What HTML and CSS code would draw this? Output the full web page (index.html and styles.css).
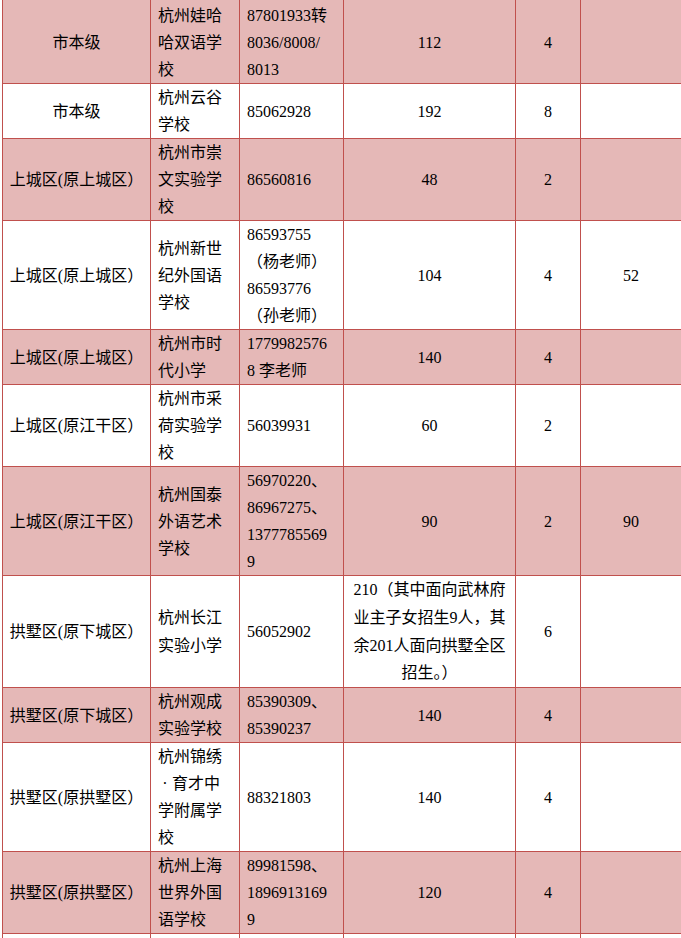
FILE: index.html
```html
<!DOCTYPE html>
<html lang="zh-CN">
<head>
<meta charset="utf-8">
<title>招生表</title>
<link rel="stylesheet" href="styles.css">
</head>
<body>
<table class="grid">
  <colgroup>
    <col class="c-area"><col class="c-name"><col class="c-tel"><col class="c-num"><col class="c-cls"><col class="c-ext">
  </colgroup>
  <tbody>
    <tr class="alt lead">
      <td class="ctr">市本级</td>
      <td>杭州娃哈<br>哈双语学<br>校</td>
      <td>87801933转<br>8036/8008/<br>8013</td>
      <td class="ctr">112</td>
      <td class="ctr">4</td>
      <td></td>
    </tr>
    <tr>
      <td class="ctr">市本级</td>
      <td>杭州云谷<br>学校</td>
      <td>85062928</td>
      <td class="ctr">192</td>
      <td class="ctr">8</td>
      <td></td>
    </tr>
    <tr class="alt">
      <td class="ctr">上城区(原上城区）</td>
      <td>杭州市崇<br>文实验学<br>校</td>
      <td>86560816</td>
      <td class="ctr">48</td>
      <td class="ctr">2</td>
      <td></td>
    </tr>
    <tr>
      <td class="ctr">上城区(原上城区）</td>
      <td>杭州新世<br>纪外国语<br>学校</td>
      <td>86593755<br>（杨老师）<br>86593776<br>（孙老师）</td>
      <td class="ctr">104</td>
      <td class="ctr">4</td>
      <td class="ctr">52</td>
    </tr>
    <tr class="alt">
      <td class="ctr">上城区(原上城区）</td>
      <td>杭州市时<br>代小学</td>
      <td>1779982576<br>8 李老师</td>
      <td class="ctr">140</td>
      <td class="ctr">4</td>
      <td></td>
    </tr>
    <tr>
      <td class="ctr">上城区(原江干区）</td>
      <td>杭州市采<br>荷实验学<br>校</td>
      <td>56039931</td>
      <td class="ctr">60</td>
      <td class="ctr">2</td>
      <td></td>
    </tr>
    <tr class="alt">
      <td class="ctr">上城区(原江干区）</td>
      <td>杭州国泰<br>外语艺术<br>学校</td>
      <td>56970220、<br>86967275、<br>1377785569<br>9</td>
      <td class="ctr">90</td>
      <td class="ctr">2</td>
      <td class="ctr">90</td>
    </tr>
    <tr class="tall">
      <td class="ctr">拱墅区(原下城区）</td>
      <td>杭州长江<br>实验小学</td>
      <td>56052902</td>
      <td class="ctr">210（其中面向武林府<br>业主子女招生9人，其<br>余201人面向拱墅全区<br>招生。）</td>
      <td class="ctr">6</td>
      <td></td>
    </tr>
    <tr class="alt">
      <td class="ctr">拱墅区(原下城区）</td>
      <td>杭州观成<br>实验学校</td>
      <td>85390309、<br>85390237</td>
      <td class="ctr">140</td>
      <td class="ctr">4</td>
      <td></td>
    </tr>
    <tr>
      <td class="ctr">拱墅区(原拱墅区）</td>
      <td>杭州锦绣<br><span class="dot">·</span>育才中<br>学附属学<br>校</td>
      <td>88321803</td>
      <td class="ctr">140</td>
      <td class="ctr">4</td>
      <td></td>
    </tr>
    <tr class="alt">
      <td class="ctr">拱墅区(原拱墅区）</td>
      <td>杭州上海<br>世界外国<br>语学校</td>
      <td>89981598、<br>1896913169<br>9</td>
      <td class="ctr">120</td>
      <td class="ctr">4</td>
      <td></td>
    </tr>
    <tr>
      <td class="ctr">&nbsp;</td>
      <td>&nbsp;</td>
      <td>&nbsp;</td>
      <td class="ctr">&nbsp;</td>
      <td class="ctr">&nbsp;</td>
      <td></td>
    </tr>
  </tbody>
</table>
</body>
</html>
```
FILE: styles.css
```css
html, body {
  margin: 0;
  padding: 0;
  background: #ffffff;
}

body {
  overflow: hidden;
}

.grid {
  border-collapse: collapse;
  table-layout: fixed;
  width: 679px;
  margin: -1px 0 0 2px;
  font-family: "Liberation Serif", "Noto Sans CJK SC", serif;
  font-size: 16px;
  line-height: 27px;
  color: #000000;
}

.c-area { width: 148px; }
.c-name { width: 89px; }
.c-tel  { width: 104px; }
.c-num  { width: 172px; }
.c-cls  { width: 65px; }
.c-ext  { width: 101px; }

.grid td {
  border: 1px solid #c0504d;
  padding: 0 7px;
  vertical-align: middle;
  text-align: left;
  white-space: nowrap;
  overflow: hidden;
}

.grid td.ctr {
  text-align: center;
  padding: 0 2px;
}

.grid tr.alt td {
  background: #e5b8b7;
}

.grid tr.lead td {
  padding-top: 2px;
}

.grid tr.tall td {
  line-height: 27.75px;
}

.dot {
  display: inline-block;
  width: 14px;
  text-align: center;
}
```
